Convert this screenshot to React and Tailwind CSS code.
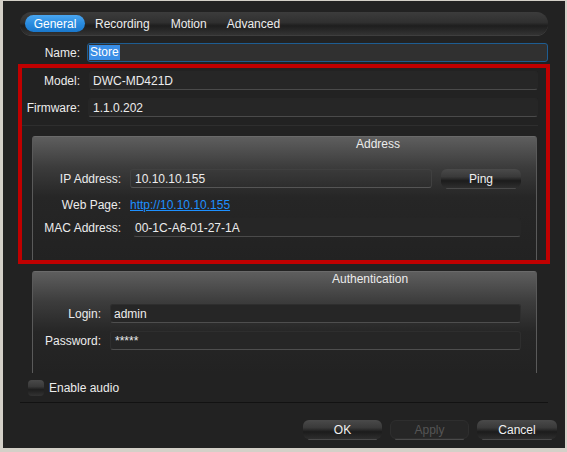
import React from "react";

const font = { fontFamily: '"Liberation Sans", Arial, sans-serif' };

function Field({ className = "", children }) {
  return (
    <div
      className={
        "h-[19px] flex items-center rounded-[3px] border border-[#2e2e2e] border-b-[#4a4a4a] bg-[#262626] text-[12px] text-[#ececec] " +
        className
      }
    >
      {children}
    </div>
  );
}

function Btn({ className = "", children, disabled }) {
  return (
    <div
      className={
        "h-[19px] flex items-center justify-center rounded-[6px] text-[12px] shadow-[0_6px_0_-5px_#4a4a4a] " +
        (disabled
          ? "bg-[#262626] border border-[#2e2e2e] text-[#555] "
          : "bg-[linear-gradient(180deg,#4a4a4a_0%,#3a3a3a_40%,#1c1c1c_62%,#2e2e2e_100%)] text-[#f0f0f0] ") +
        className
      }
    >
      {children}
    </div>
  );
}

export default function App() {
  return (
    <div
      className="w-[567px] h-[452px] bg-[#d4d0c8] pl-[3px] pt-px pr-[2px] pb-[4px]"
      style={font}
    >
      <div className="h-full bg-[#222222] flex flex-col text-[#ececec] text-[12px] leading-[14px]">
        {/* Tabs */}
        <div className="mt-[11px] ml-[17px] w-[528px] h-[23px] rounded-full bg-[linear-gradient(180deg,#3c3c3c_0%,#303030_45%,#1e1e1e_60%,#333333_100%)] shadow-[0_1px_0_#3e3e3e] flex items-center">
          <div className="ml-[5px] w-[60px] h-[17px] rounded-full bg-[linear-gradient(180deg,#4aa6f0_0%,#2a8ce0_50%,#1a78cc_100%)] flex items-center justify-center text-white">
            General
          </div>
          <div className="ml-[10px]">Recording</div>
          <div className="ml-[21px]">Motion</div>
          <div className="ml-[20px]">Advanced</div>
        </div>

        {/* Name */}
        <div className="mt-[8px] h-[19px] flex items-center">
          <div className="w-[77px] text-right">Name:</div>
          <div className="ml-[7px] w-[461px] h-[19px] rounded-[3px] border border-[#1e5d92] bg-[#303030] flex items-center pl-px">
            <span className="bg-[#3a8ee6] text-white px-px leading-[15px]">Store</span>
          </div>
        </div>

        {/* Red highlighted box */}
        <div className="mt-[2px] ml-[15px] w-[532px] h-[200px] border-4 border-[#c00000] flex flex-col overflow-hidden">
          <div className="mt-[3px] h-[19px] flex items-center">
            <div className="w-[58px] text-right">Model:</div>
            <Field className="ml-[9px] w-[449px] pl-[3px] border-[#262626] bg-[#242424]">DWC-MD421D</Field>
          </div>
          <div className="mt-[8px] h-[19px] flex items-center">
            <div className="w-[58px] text-right">Firmware:</div>
            <Field className="ml-[8px] w-[450px] pl-[4px] border-[#262626] bg-[#242424]">1.1.0.202</Field>
          </div>
          <div className="mt-[8px] h-px w-[516px] bg-[#2e2e2e]" />
          <div className="mt-[10px] ml-[10px] w-[505px] flex-1 rounded-t-[3px] border border-b-0 border-[#5a5a5a] border-t-[#6a6a6a] bg-[linear-gradient(180deg,#5e5e5e_0px,#3c3c3c_30px,#262626_60px,#222222_100%)] flex flex-col">
            <div className="ml-[323px]">Address</div>
            <div className="mt-[18px] h-[19px] flex items-center">
              <div className="w-[88px] text-right">IP Address:</div>
              <Field className="ml-[9px] w-[302px] pl-[4px] bg-transparent border-[#404040] border-b-[#555]">10.10.10.155</Field>
              <Btn className="ml-[9px] w-[80px]">Ping</Btn>
            </div>
            <div className="mt-[7px] h-[19px] flex items-center">
              <div className="w-[88px] text-right">Web Page:</div>
              <div className="ml-[9px] text-[#1e90ff] underline">http://10.10.10.155</div>
            </div>
            <div className="mt-[4px] h-[19px] flex items-center">
              <div className="w-[88px] text-right">MAC Address:</div>
              <Field className="ml-[12px] w-[388px] pl-px border-[#262626] bg-[#222222] border-b-[#3a3a3a]">00-1C-A6-01-27-1A</Field>
            </div>
          </div>
        </div>

        {/* Authentication */}
        <div className="mt-[7px] ml-[29px] w-[505px] h-[102px] rounded-t-[3px] border border-b-0 border-[#5a5a5a] border-t-[#6a6a6a] bg-[linear-gradient(180deg,#5e5e5e_0px,#3c3c3c_30px,#262626_60px,#222222_100%)] flex flex-col">
          <div className="ml-[299px]">Authentication</div>
          <div className="mt-[18px] h-[19px] flex items-center">
            <div className="w-[68px] text-right">Login:</div>
            <Field className="ml-[9px] w-[411px] pl-[3px] bg-[#2c2c2c] border-[#2a2a2a] border-b-[#4e4e4e]">admin</Field>
          </div>
          <div className="mt-[8px] h-[19px] flex items-center">
            <div className="w-[68px] text-right">Password:</div>
            <Field className="ml-[9px] w-[411px] pl-[4px] bg-[#2c2c2c] border-[#2a2a2a] border-b-[#4e4e4e]">*****</Field>
          </div>
        </div>

        {/* Enable audio */}
        <div className="mt-[7px] h-[16px] flex items-center">
          <div className="ml-[25px] w-[16px] h-[16px] rounded-[4px] bg-[linear-gradient(180deg,#4a4a4a_0%,#3a3a3a_40%,#1e1e1e_60%,#333_100%)]" />
          <div className="ml-[5px]">Enable audio</div>
        </div>
        <div className="mt-[6px] ml-[17px] w-[528px] h-px bg-[#121212]" />

        {/* Buttons */}
        <div className="mt-[17px] flex">
          <Btn className="ml-[300px] w-[79px]">OK</Btn>
          <Btn className="ml-[8px] w-[79px]" disabled>Apply</Btn>
          <Btn className="ml-[8px] w-[80px]">Cancel</Btn>
        </div>
      </div>
    </div>
  );
}
